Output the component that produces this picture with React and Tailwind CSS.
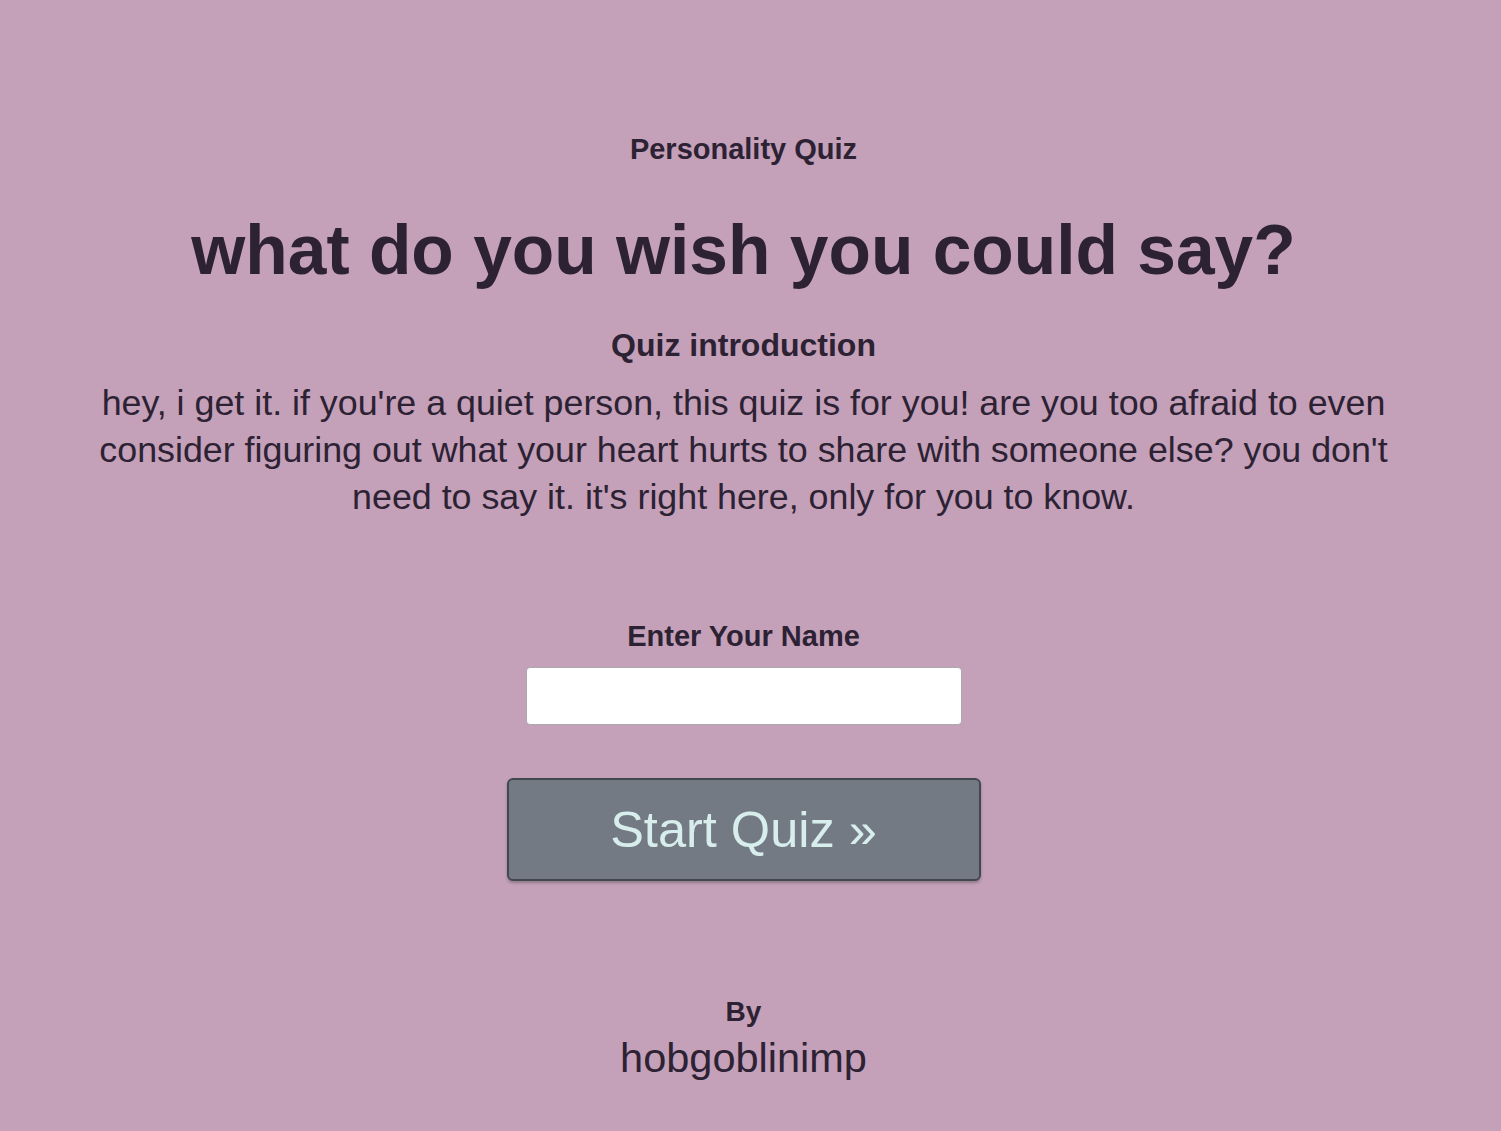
export default function App() {
  return (
    <div className="min-h-[1131px] bg-[#c4a0b9] text-[#2c2233] font-['Liberation_Sans',Arial,sans-serif]">
      <div className="flex flex-col items-center pr-[14px] pt-[133px] text-center">
        <h3 className="text-[29px] leading-[32px] font-bold">Personality Quiz</h3>
        <h1 className="mt-[45px] text-[69.5px] leading-[80px] font-bold">what do you wish you could say?</h1>
        <h2 className="mt-[37px] text-[32px] leading-[36px] font-bold">Quiz introduction</h2>
        <p className="mt-[17px] px-[70px] text-[35.8px] leading-[47px]">
          hey, i get it. if you're a quiet person, this quiz is for you! are you too afraid to even consider figuring
          out what your heart hurts to share with someone else? you don't need to say it. it's right here, only for you
          to know.
        </p>
        <label className="mt-[99px] text-[29px] leading-[32px] font-bold" htmlFor="name">
          Enter Your Name
        </label>
        <input
          id="name"
          type="text"
          className="mt-[15px] h-[58px] w-[436px] rounded-[4px] border border-[#a9a9a9] bg-white px-3 text-[24px] outline-none"
        />
        <button
          type="button"
          className="mt-[53px] h-[103px] w-[474px] rounded-[6px] border-2 border-[#43484e] bg-[#737a84] text-[50.5px] text-[#d8eeec] shadow-[0_2px_3px_rgba(0,0,0,0.25)]"
        >
          Start Quiz »
        </button>
        <div className="mt-[115px] text-[28px] leading-[32px] font-bold">By</div>
        <div className="mt-[6px] text-[41.5px] leading-[48px]">hobgoblinimp</div>
      </div>
    </div>
  );
}
